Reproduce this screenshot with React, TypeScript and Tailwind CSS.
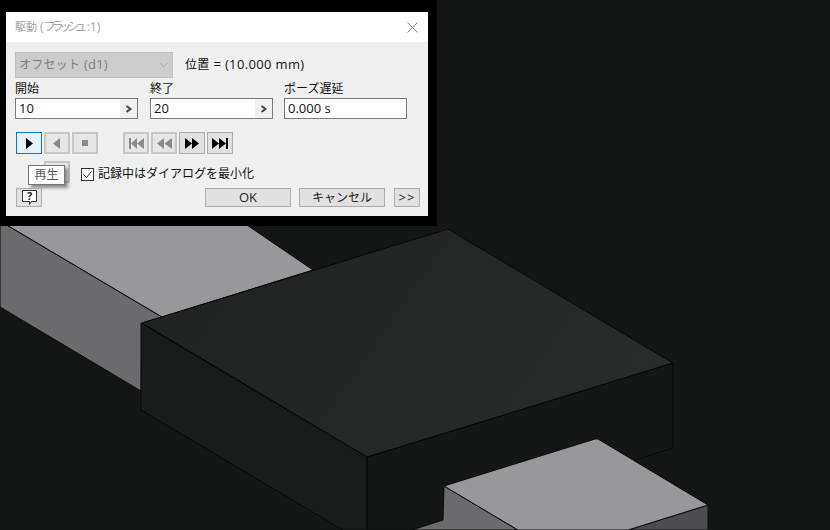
import React from "react";

const font = { fontFamily: '"Open Sans", "Noto Sans CJK JP", sans-serif' };

const Scene = () => (
  <svg className="absolute inset-0" width={830} height={530} viewBox="0 0 830 530">
    <defs>
      <linearGradient id="topFace" x1="0" y1="0" x2="1" y2="0.3">
        <stop offset="0" stopColor="#202222" />
        <stop offset="1" stopColor="#292a2a" />
      </linearGradient>
    </defs>
    <rect width={830} height={530} fill="#141515" />
    {/* left bar */}
    <polygon points="0,221 162,317 142,323 141,391 0,307" fill="#6b6b6d" stroke="#0b0b0b" strokeWidth={1} />
    <polygon points="0,221 241,221 313,270 162,317" fill="#98989c" stroke="#0b0b0b" strokeWidth={1} />
    {/* big block */}
    <polygon points="141,323 367,457 367,530 343,530 141,410" fill="#1a1c1c" stroke="#060606" strokeWidth={1} />
    <polygon points="367,457 673,363 673,448 412,530 367,530" fill="#151717" stroke="#060606" strokeWidth={1} />
    <polygon points="142,323 448,229 673,363 367,457" fill="url(#topFace)" stroke="#060606" strokeWidth={1} />
    {/* front bar */}
    <polygon points="444,486 518,530 412,530 443,520" fill="#6b6b6d" stroke="#0b0b0b" strokeWidth={1} />
    <polygon points="708,505 628,530 708,530" fill="#4d4d50" stroke="#0b0b0b" strokeWidth={1} />
    <polygon points="444,486 595,439 598,439 708,505 628,530 518,530" fill="#98989c" stroke="#0b0b0b" strokeWidth={1} />
  </svg>
);

const Spin = () => (
  <div className="flex h-full w-[17px] items-center justify-center bg-[#f0f0f0]">
    <svg width={8} height={8} viewBox="0 0 8 8">
      <path d="M1.5 1 L5.5 4 L1.5 7" fill="none" stroke="#444" strokeWidth={2} />
    </svg>
  </div>
);

const Field = ({ label, value, spin }: { label: string; value: string; spin?: boolean }) => (
  <div className="flex w-[123px] flex-col">
    <div className="h-[19px] text-[12px] leading-[19px] text-[#111]">{label}</div>
    <div className="flex h-[21px] items-center justify-between border border-[#7a7a7a] bg-white pl-[3px] text-[13px] text-[#111]">
      <span>{value}</span>
      {spin && <Spin />}
    </div>
  </div>
);

const MediaBtn = ({ kind, children }: { kind: "on" | "off" | "focus"; children: React.ReactNode }) => {
  const cls =
    kind === "focus"
      ? "border border-[#0078d7] bg-[#e5f1fb]"
      : kind === "on"
        ? "border border-[#adadad] bg-[#e1e1e1]"
        : "border-2 border-[#c6c6c6] bg-[#e6e6e6]";
  return (
    <div className="relative h-[22px] w-[26px]">
      <div className={`absolute inset-0 ${cls}`} />
      {children}
    </div>
  );
};

const Ico = ({ fill, points, bar }: { fill: string; points: string[]; bar?: number }) => (
  <svg className="absolute left-0 top-0" width={26} height={22} viewBox="0 0 26 22">
    {points.map((p) => (
      <polygon key={p} points={p} fill={fill} />
    ))}
    {bar !== undefined && <rect x={bar} y={6} width={2} height={11} fill={fill} />}
  </svg>
);

const PlainBtn = ({ className, children }: { className: string; children: React.ReactNode }) => (
  <div className={`flex h-[19px] items-center justify-center border border-[#adadad] bg-[#e1e1e1] text-[#222] ${className}`}>
    {children}
  </div>
);

export default function App() {
  return (
    <div className="relative h-[530px] w-[830px] overflow-hidden bg-[#141515]" style={font}>
      <Scene />

      {/* dialog window with the black frame round it */}
      <div className="absolute left-0 top-0 h-[226px] w-[437px] bg-black pl-[6px] pt-[12px]">
        <div className="flex h-[204px] w-[422px] flex-col bg-[#f0f0f0]">
          <div className="flex h-[30px] items-center justify-between bg-white pl-[9px] pr-[10px] text-[12px] text-[#a3a3a3]">
            <span>
              <span className="text-[11px]">駆動</span> (<span className="tracking-[-4.2px]">フラッシュ</span>
              <span className="ml-[4px]">:1)</span>
            </span>
            <svg width={11} height={11} viewBox="0 0 11 11">
              <path d="M0.5 0.5 L10.5 10.5 M10.5 0.5 L0.5 10.5" stroke="#808080" strokeWidth={1} />
            </svg>
          </div>

          <div className="ml-[9px] mt-[10px] flex h-[26px] items-center">
            <div className="flex h-[26px] w-[158px] items-center justify-between border border-[#bfbfbf] bg-[#cccccc] pl-[3px] pr-[4px] text-[13px] text-[#7d7d7d]">
              <span className="tracking-[0.25px]">
                <span className="text-[12px]">オフセット</span> (d1)
              </span>
              <svg width={9} height={6} viewBox="0 0 9 6">
                <path d="M0.5 0.5 L4.5 4.5 L8.5 0.5" fill="none" stroke="#a8a8a8" strokeWidth={1} />
              </svg>
            </div>
            <span className="ml-[12px] text-[13px] tracking-[0.35px] text-[#111]">
              <span className="text-[12px]">位置</span> = (10.000 mm)
            </span>
          </div>

          <div className="ml-[9px] mt-[1px] flex">
            <Field label="開始" value="10" spin />
            <div className="ml-[12px]">
              <Field label="終了" value="20" spin />
            </div>
            <div className="ml-[11px]">
              <Field label="ポーズ遅延" value="0.000 s" />
            </div>
          </div>

          <div className="ml-[10px] mt-[13px] flex gap-[2px]">
            <MediaBtn kind="focus">
              <Ico fill="#000" points={["10,6 17,11.5 10,17"]} />
            </MediaBtn>
            <MediaBtn kind="off">
              <Ico fill="#8a8a8a" points={["16,6 9,11.5 16,17"]} />
            </MediaBtn>
            <MediaBtn kind="off">
              <Ico fill="#8a8a8a" points={["10,8 16,8 16,14 10,14"]} />
            </MediaBtn>
            <div className="ml-[23px] flex gap-[2px]">
              <MediaBtn kind="off">
                <Ico fill="#8a8a8a" bar={6} points={["14,6 8,11.5 14,17", "21,6 14,11.5 21,17"]} />
              </MediaBtn>
              <MediaBtn kind="off">
                <Ico fill="#8a8a8a" points={["13,6 6,11.5 13,17", "21,6 13.5,11.5 21,17"]} />
              </MediaBtn>
              <MediaBtn kind="on">
                <Ico fill="#000" points={["6,6 13,11.5 6,17", "13,6 20,11.5 13,17"]} />
              </MediaBtn>
              <MediaBtn kind="on">
                <Ico fill="#000" bar={19} points={["5,6 12,11.5 5,17", "12,6 19,11.5 12,17"]} />
              </MediaBtn>
            </div>
          </div>

          <div className="relative ml-[38px] mt-[7px] flex h-[22px] items-center">
            <div className="h-[22px] w-[26px] border-2 border-[#c6c6c6] bg-[#e6e6e6]" />
            <div className="ml-[11px] mt-[4px] flex h-[13px] w-[13px] items-center justify-center border border-[#333] bg-white">
              <svg width={11} height={11} viewBox="0 0 11 11">
                <path d="M1.5 5.5 L4.5 8.5 L9.5 2.5" fill="none" stroke="#333" strokeWidth={1} />
              </svg>
            </div>
            <span className="ml-[4px] mt-[4px] text-[12px] text-[#111]">記録中はダイアログを最小化</span>

            {/* tooltip over the hidden button */}
            <div className="absolute -left-[16px] top-[4px] flex h-[20px] w-[37px] items-center justify-center border border-[#767676] bg-white text-[12px] text-[#575757] shadow-[3px_3px_3px_rgba(0,0,0,0.4)]">
              再生
            </div>
          </div>

          <div className="ml-[10px] mt-[5px] flex pr-[8px]">
            <div className="relative h-[19px] w-[26px] border border-[#adadad] bg-[#e1e1e1]">
              <svg className="absolute -left-[1px] -top-[1px]" width={26} height={19} viewBox="0 0 26 19">
                <path d="M6.5 2.5 H20.5 V13.5 H15.5 L13.5 16.5 V13.5 H6.5 Z" fill="#fff" stroke="#333" strokeWidth={1} />
                <text x={13.5} y={12} textAnchor="middle" fontSize={11} fontWeight={700} fill="#222">?</text>
              </svg>
            </div>
            <PlainBtn className="ml-[163px] w-[86px] text-[13px]">OK</PlainBtn>
            <PlainBtn className="ml-[8px] w-[86px] text-[12px]">キャンセル</PlainBtn>
            <PlainBtn className="ml-[9px] w-[26px] text-[13px] tracking-[1px]">&gt;&gt;</PlainBtn>
          </div>
        </div>
      </div>
    </div>
  );
}
